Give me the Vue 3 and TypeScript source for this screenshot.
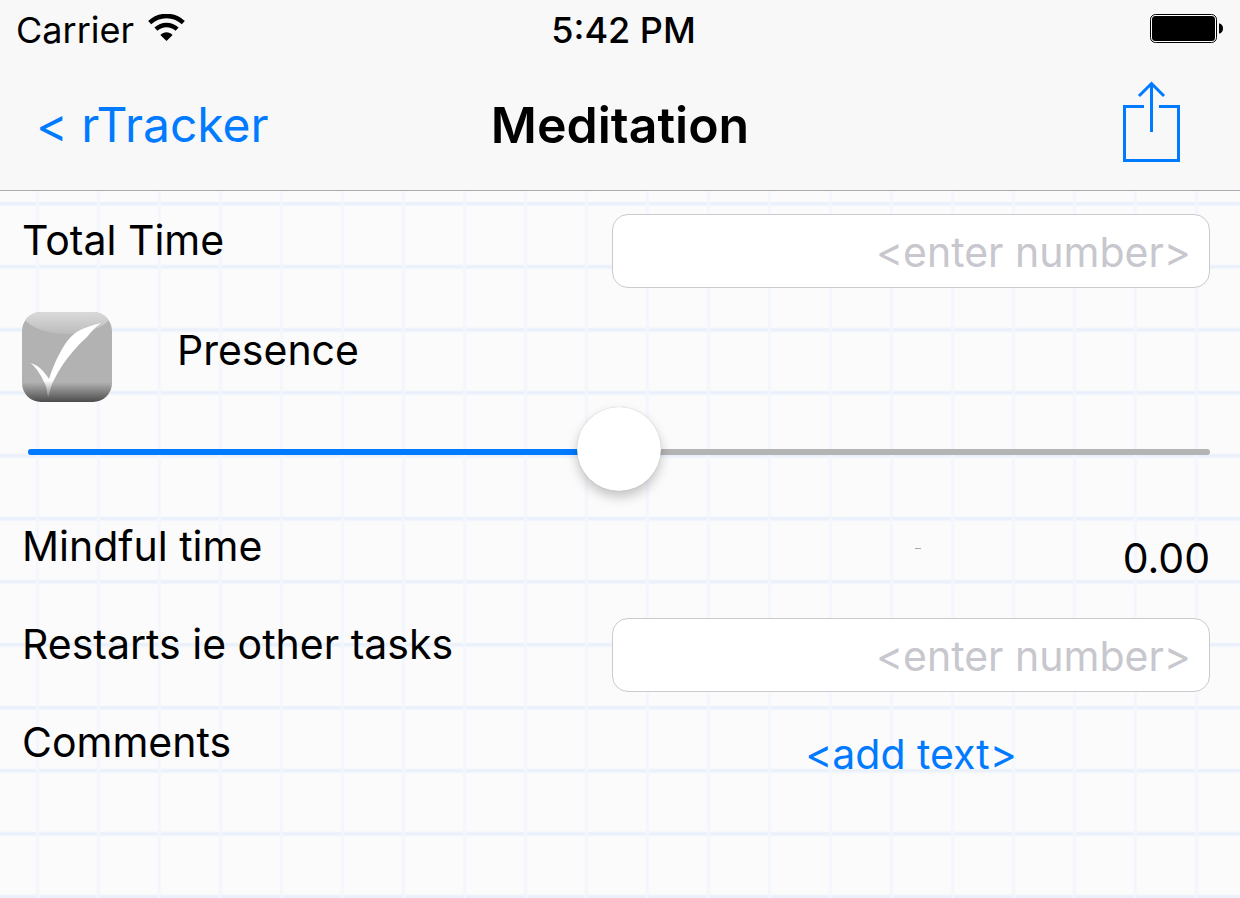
<script setup lang="ts">
import { computed, ref } from 'vue'

const totalTime = ref('')
const restarts = ref('')
const present = ref(false)
const level = ref(50)
const mindfulTime = ref(0)

const fill = computed(() => ({ width: `${level.value}%` }))
</script>

<template>
  <div class="screen">
    <header class="top">
      <div class="status">
        <div class="carrier">
          <span>Carrier</span>
          <svg class="wifi" viewBox="0 0 37 27" width="37" height="27" aria-hidden="true">
            <g fill="none" stroke="#000" stroke-width="4.4">
              <path d="M1.7 8.6 C11 -.3 26 -.3 35.3 8.6" />
              <path d="M7.9 15.2 C14 9.6 23 9.6 29.1 15.2" />
            </g>
            <path d="M12.4 21 C16 17.2 21 17.2 24.6 21 L18.5 27Z" />
          </svg>
        </div>
        <span class="clock">5:42 PM</span>
        <svg class="battery" viewBox="0 0 73 29" width="73" height="29" aria-hidden="true">
          <rect x=".5" y=".5" width="66" height="28" rx="5" fill="#fff" stroke="#000" />
          <rect x="2" y="2" width="63" height="25" rx="3.5" />
          <path d="M69 9.5 C71.5 9.5 73 12 73 14.5 S71.5 19.5 69 19.5Z" />
        </svg>
      </div>
      <nav class="nav">
        <a class="back" href="#">&lt; rTracker</a>
        <h1>Meditation</h1>
        <button class="share" type="button" aria-label="Share">
          <svg viewBox="0 0 57 81" width="57" height="81" fill="none" stroke="#007aff" stroke-width="3">
            <path d="M21 25.5H1.5V79.5H55.5V25.5H36" />
            <path d="M28.5 51V2" />
            <path d="M16 15L28.5 2.5L41 15" />
          </svg>
        </button>
      </nav>
    </header>

    <main class="form">
      <div class="row">
        <label class="name" for="total">Total Time</label>
        <input id="total" v-model="totalTime" class="field" type="text" inputmode="decimal" placeholder="<enter number>" />
      </div>

      <label class="check">
        <input v-model="present" type="checkbox" />
        <svg class="tick" viewBox="0 0 90 90" width="90" height="90" aria-hidden="true">
          <defs>
            <linearGradient id="shade" x1="0" y1="0" x2="0" y2="1">
              <stop offset="0" stop-color="#b2b2b2" />
              <stop offset=".78" stop-color="#b2b2b2" />
              <stop offset="1" stop-color="#4c4c4c" />
            </linearGradient>
            <linearGradient id="gloss" gradientUnits="userSpaceOnUse" x1="0" y1="0" x2="0" y2="22">
              <stop offset="0" stop-color="#dadada" />
              <stop offset="1" stop-color="#bcbcbc" />
            </linearGradient>
            <linearGradient id="mark" gradientUnits="userSpaceOnUse" x1="0" y1="0" x2="0" y2="90">
              <stop offset="0" stop-color="#fff" />
              <stop offset=".76" stop-color="#fff" />
              <stop offset=".95" stop-color="#808080" />
            </linearGradient>
            <clipPath id="tile"><rect width="90" height="90" rx="19" /></clipPath>
          </defs>
          <g clip-path="url(#tile)">
            <rect width="90" height="90" fill="url(#shade)" />
            <ellipse cx="45" cy="0" rx="45" ry="22" fill="url(#gloss)" />
            <path
              d="M8.5 51 C16 53 22 59 27 67 C30 57 34 48 38 41 C42 33 47 26 52 22 C59 16.5 69 13.5 79 11 C73 15 69 20 65 25 C58 31 53 37 48 43 C42 50 37 58 33 66 C29 73 27.5 79 26.5 85 C25 83 25 77 23.5 73 C20 65 15 56 8.5 51Z"
              fill="url(#mark)"
            />
          </g>
        </svg>
        <span class="check-name">Presence</span>
      </label>

      <div class="slider">
        <div class="bar"><div class="bar-fill" :style="fill"></div></div>
        <input v-model.number="level" type="range" min="0" max="100" aria-label="Presence level" />
      </div>

      <div class="row">
        <span class="name">Mindful time</span>
        <div class="result">
          <span class="dash"></span>
          <output>{{ mindfulTime.toFixed(2) }}</output>
        </div>
      </div>

      <div class="row">
        <label class="name" for="restarts">Restarts ie other tasks</label>
        <input id="restarts" v-model="restarts" class="field" type="text" inputmode="numeric" placeholder="<enter number>" />
      </div>

      <div class="row">
        <span class="name">Comments</span>
        <button class="add" type="button">&lt;add text&gt;</button>
      </div>
    </main>
  </div>
</template>

<style>
body {
  margin: 0;
}
</style>

<style scoped>
.screen {
  display: flex;
  flex-direction: column;
  min-height: 100vh;
  font-family: Inter, 'Liberation Sans', sans-serif;
  font-size: 41px;
  line-height: 52px;
  color: #000;
}

.top {
  background: #f8f8f8;
  border-bottom: 1px solid #acacae;
}

.status {
  display: grid;
  grid-template-columns: 1fr auto 1fr;
  align-items: center;
  height: 60px;
  padding: 0 17px 0 16px;
  font-size: 36px;
}

.carrier {
  display: flex;
  align-items: center;
  gap: 14px;
}

.wifi {
  margin-bottom: 6px;
}

.clock {
  padding-left: 8px;
  font-weight: 500;
}

.battery {
  justify-self: end;
  margin-bottom: 3px;
}

.nav {
  display: grid;
  grid-template-columns: 1fr auto 1fr;
  align-items: center;
  height: 130px;
}

.back {
  padding-left: 36px;
  font-size: 48px;
  color: #007aff;
  text-decoration: none;
}

h1 {
  margin: 0;
  font-size: 50px;
  font-weight: 600;
}

button {
  padding: 0;
  border: 0;
  background: none;
  font: inherit;
  color: #007aff;
  cursor: pointer;
}

.share {
  display: flex;
  justify-self: end;
  padding: 0 60px 8px 0;
}

.form {
  flex: 1;
  padding: 23px 30px 24px 14px;
  background-color: #fbfbfc;
  background-image:
    repeating-linear-gradient(90deg, transparent 0 35px, #f3f6fc 37px 38px, transparent 40px 61px),
    repeating-linear-gradient(180deg, transparent 0 10px, #e9f0fb 12px 13px, transparent 16px 63px);
}

.row {
  display: grid;
  grid-template-columns: 1fr 1fr;
  align-items: center;
  min-height: 74px;
  margin-bottom: 24px;
}

.name {
  align-self: start;
  padding-left: 8px;
}

.field {
  box-sizing: border-box;
  width: 100%;
  height: 74px;
  padding: 2px 18px 0;
  border: 1px solid #cbcbcd;
  border-radius: 16px;
  background: #fff;
  font: inherit;
  text-align: right;
  outline: 0;
}

.field::placeholder {
  color: #c7c7cd;
  opacity: 1;
}

.check {
  display: flex;
  align-items: flex-start;
  padding-left: 8px;
}

.check input {
  position: absolute;
  opacity: 0;
}

.check-name {
  padding: 12px 0 0 65px;
}

.slider {
  display: grid;
  align-items: center;
  height: 94px;
  margin: 0 0 24px 14px;
}

.bar,
.slider input {
  grid-area: 1 / 1;
}

.bar {
  height: 6px;
  margin-top: 6px;
  border-radius: 3px;
  background: #b4b4b4;
  overflow: hidden;
}

.bar-fill {
  height: 100%;
  background: #007aff;
}

.slider input {
  appearance: none;
  width: 100%;
  height: 84px;
  margin: 0;
  background: none;
  outline: 0;
}

.slider input::-webkit-slider-thumb {
  appearance: none;
  width: 84px;
  height: 84px;
  border-radius: 50%;
  background: #fff;
  box-shadow: 0 0 1px rgba(0, 0, 0, 0.25), 0 6px 12px rgba(0, 0, 0, 0.22);
}

.result {
  display: grid;
  grid-template-columns: 1fr 6px 1fr;
  align-items: center;
  padding: 2px 0 0 14px;
}

.dash {
  grid-column: 2;
  height: 1px;
  margin-bottom: 20px;
  background: #a8a8a8;
}

.result output {
  text-align: right;
}

.add {
  justify-self: center;
  padding-top: 2px;
}
</style>
